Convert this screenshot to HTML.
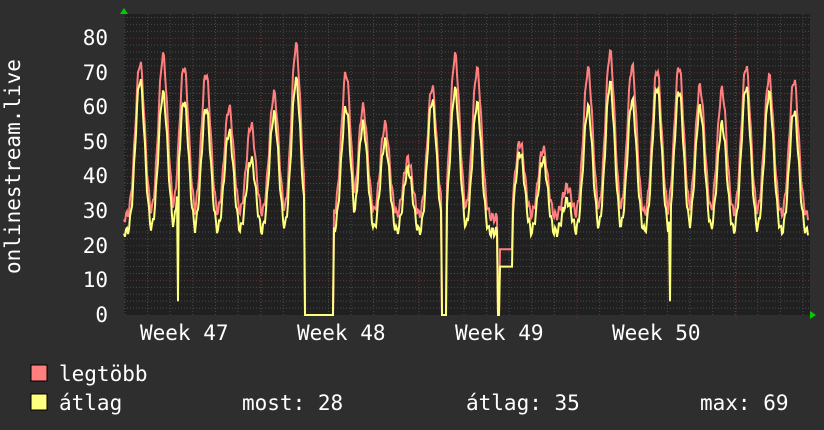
<!DOCTYPE html>
<html><head><meta charset="utf-8"><style>
html,body{margin:0;padding:0;background:#2e2e2e;width:824px;height:430px;overflow:hidden}
svg text{font-family:"DejaVu Sans Mono","Liberation Mono",monospace;fill:#fff}
</style></head><body>
<svg id="s" width="824" height="430" xmlns="http://www.w3.org/2000/svg">
<rect x="0" y="0" width="824" height="430" fill="#2e2e2e"/>
<rect x="124" y="14" width="686" height="301" fill="#202020"/>
<g id="grid"></g>
<polyline id="red" fill="none" stroke="#ff7f7f" stroke-width="2"/>
<polyline id="yel" fill="none" stroke="#ffff7f" stroke-width="2"/>
<polygon points="120,14 128,14 124,8" fill="#00cc00"/>
<polygon points="810,311 810,319 816,315" fill="#00cc00"/>
<g font-size="21" text-anchor="end">
<text x="108" y="45">80</text><text x="108" y="80">70</text><text x="108" y="114">60</text>
<text x="108" y="149">50</text><text x="108" y="183">40</text><text x="108" y="218">30</text>
<text x="108" y="253">20</text><text x="108" y="287">10</text><text x="108" y="322">0</text>
</g>
<text transform="translate(20,274) rotate(-90)" font-size="21">onlinestream.live</text>
<g font-size="21">
<text x="140" y="340">Week 47</text><text x="297" y="340">Week 48</text>
<text x="455" y="340">Week 49</text><text x="612" y="340">Week 50</text>
</g>
<rect x="31" y="365" width="16" height="16" fill="#ff7f7f" stroke="#000"/>
<rect x="31" y="394" width="16" height="16" fill="#ffff7f" stroke="#000"/>
<g font-size="21">
<text x="59" y="381">legtöbb</text>
<text x="59" y="410">átlag</text>
<text x="242" y="410">most: 28</text>
<text x="466" y="410">átlag: 35</text>
<text x="700" y="410">max: 69</text>
</g>
</svg>
<script>
var g=document.getElementById('grid'),h='';
function Y(v){return 315-v*3.46}
for(var v=2;v<=86;v+=2){var y=Y(v);if(y<14)break;h+='<line x1="124" x2="810" y1="'+y+'" y2="'+y+'" stroke="'+(v%10==0?'#6a3030':'#4a4a4a')+'" stroke-dasharray="1,2"/>';}
for(var x=125;x<810;x+=22.6){h+='<line y1="14" y2="315" x1="'+x+'" x2="'+x+'" stroke="#4a4a4a" stroke-dasharray="1,2"/>';}
[261,419,577,736].forEach(function(x){h+='<line y1="14" y2="318" x1="'+x+'" x2="'+x+'" stroke="#6a3030" stroke-dasharray="1,2"/>';});
g.innerHTML=h;
var P=[[140,73,68],[163,75,64],[184,72,62],[206,70,60],[229,60,53],[251,55,45],[274,64,58],[296,78,68],[346,70,60],[363,60,55],[385,55,50],[408,45,42],[432,66,62],[455,75,65],[477,71,61],[520,50,47],[543,48,45],[567,37,33],[588,71,60],[610,76,67],[632,72,62],[657,71,66],[679,72,65],[700,66,60],[722,65,55],[746,72,66],[769,69,64],[794,68,59]];
var r=[],yl=[];
for(var x=124;x<=808;x++){
 var rv=28,yv=24;
 P.forEach(function(p){var d=(x-p[0])/6.5,e=Math.exp(-d*d);rv=Math.max(rv,28+(p[1]-28)*e);yv=Math.max(yv,23+(p[2]-23)*e);});
 var w=Math.sin(x*1.7)*1.5;rv+=w;yv+=w;
 if(x>=305&&x<=333){rv=0;yv=0;}
 if(x>=442&&x<=446){rv=0;yv=0;}
 if(x==498||x==499){rv=0;yv=0;}
 if(x>=500&&x<=512){rv=19;yv=14;}
 if(x==178||x==670){yv=4;}
 r.push(x+','+Y(rv).toFixed(1));yl.push(x+','+Y(yv).toFixed(1));
}
document.getElementById('red').setAttribute('points',r.join(' '));
document.getElementById('yel').setAttribute('points',yl.join(' '));
</script>
</body></html>
